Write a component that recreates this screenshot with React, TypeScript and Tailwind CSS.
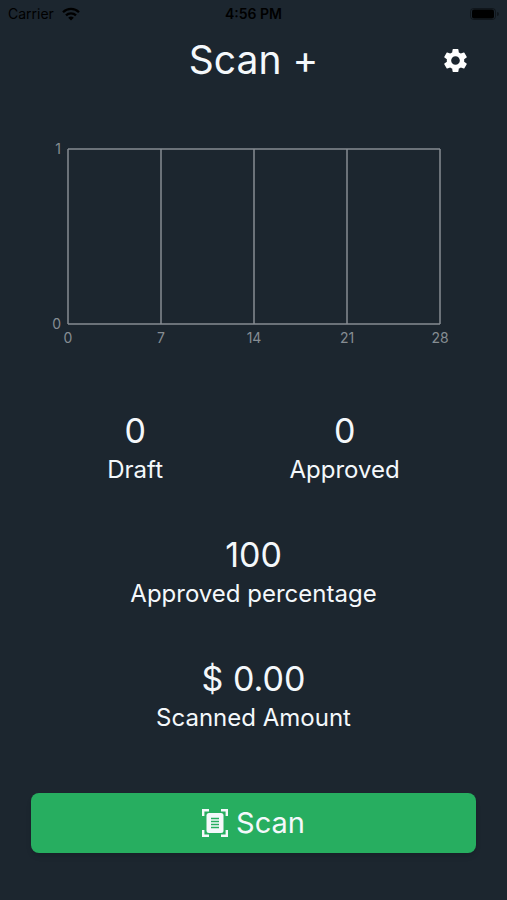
import { MdSettings } from "react-icons/md";

interface StatProps {
  value: string;
  label: string;
}

const totals: StatProps[] = [
  { value: "0", label: "Draft" },
  { value: "0", label: "Approved" },
];

const days = [0, 7, 14, 21, 28];

function Stat({ value, label }: StatProps) {
  return (
    <div className="text-center">
      <p className="text-[34px] leading-[42px]">{value}</p>
      <p className="text-2xl leading-9">{label}</p>
    </div>
  );
}

function StatusBar() {
  return (
    <div className="grid h-7 grid-cols-3 items-center px-2 text-sm text-black">
      <div className="flex items-center gap-2">
        <span>Carrier</span>
        <svg width="18" height="14" viewBox="0 0 18 14" fill="none" stroke="currentColor" strokeWidth="2.3">
          <path d="M1 5.2a11.4 11.4 0 0 1 16 0" />
          <path d="M4 8.4a7.1 7.1 0 0 1 10 0" />
          <path d="M9 13.6 6.2 10.8a4 4 0 0 1 5.6 0Z" fill="currentColor" stroke="none" />
        </svg>
      </div>
      <span className="text-center font-semibold">4:56 PM</span>
      <svg className="justify-self-end" width="29" height="12" viewBox="0 0 29 12" fill="none">
        <rect x="0.5" y="0.5" width="25" height="11" rx="3" stroke="#000" strokeOpacity="0.4" />
        <rect x="2" y="1.5" width="22" height="9" rx="2" fill="#000" />
        <path d="M27 4v4a2 2 0 0 0 0-4Z" fill="#000" fillOpacity="0.4" />
      </svg>
    </div>
  );
}

function ScanChart() {
  const left = 68;
  const step = 93;
  const top = 9;
  const bottom = 184;

  return (
    <svg
      className="mt-[52px] w-full text-[#868d93]"
      viewBox="0 0 507 218"
      role="img"
      aria-label="Scans over the last 28 days"
    >
      <g stroke="currentColor" strokeWidth="1.5">
        {days.map((day, i) => (
          <line key={day} x1={left + i * step} x2={left + i * step} y1={top} y2={bottom} />
        ))}
        <line x1={left} x2={left + 4 * step} y1={top} y2={top} />
        <line x1={left} x2={left + 4 * step} y1={bottom} y2={bottom} />
      </g>
      <g fill="currentColor" fontSize="14">
        <text x="61" y={top + 5} textAnchor="end">1</text>
        <text x="61" y={bottom + 5} textAnchor="end">0</text>
        {days.map((day, i) => (
          <text key={day} x={left + i * step} y={bottom + 19} textAnchor="middle">
            {day}
          </text>
        ))}
      </g>
    </svg>
  );
}

function ScanIcon() {
  return (
    <svg width="26" height="28" viewBox="0 0 26 28" fill="none" aria-hidden="true">
      <path
        d="M1.2 7V1.2H7M19 1.2h5.8V7M24.8 21v5.8H19M7 26.8H1.2V21"
        stroke="currentColor"
        strokeWidth="2.4"
      />
      <rect x="4.5" y="4" width="17" height="20" rx="2.5" fill="currentColor" />
      <path d="M9 9.5h8M9 12.5h8M9 15.5h8M9 18.5h8" stroke="#27ae60" strokeWidth="1.7" />
    </svg>
  );
}

export default function App() {
  return (
    <div className="min-h-screen bg-[#1c262f] pb-11 font-['Inter','Liberation_Sans',sans-serif] text-[#f4f8fb]">
      <StatusBar />

      <header className="grid grid-cols-[1fr_auto_1fr] items-center px-[37px] pt-1">
        <h1 className="col-start-2 text-[39px] leading-14">Scan +</h1>
        <button type="button" aria-label="Settings" className="justify-self-end text-white">
          <MdSettings size={29} />
        </button>
      </header>

      <main>
        <ScanChart />

        <section className="mt-[52px] flex flex-col gap-[46px]">
          <div className="flex justify-around px-11">
            {totals.map((total) => (
              <Stat key={total.label} value={total.value} label={total.label} />
            ))}
          </div>
          <Stat value="100" label="Approved percentage" />
          <Stat value="$ 0.00" label="Scanned Amount" />
        </section>

        <div className="mt-[57px] px-[31px]">
          <button
            type="button"
            className="flex h-[60px] w-full items-center justify-center gap-2 rounded-lg bg-[#27ae60] text-[29px] shadow-md"
          >
            <ScanIcon />
            Scan
          </button>
        </div>
      </main>
    </div>
  );
}
